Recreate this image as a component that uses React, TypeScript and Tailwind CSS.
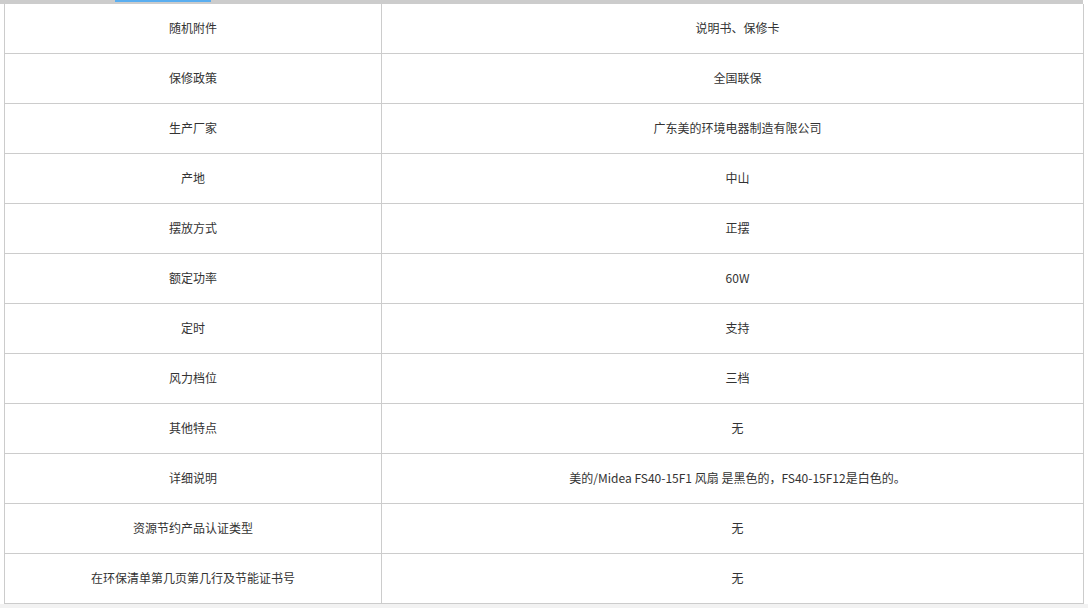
import React from "react";

const rows: [string, string][] = [
  ["随机附件", "说明书、保修卡"],
  ["保修政策", "全国联保"],
  ["生产厂家", "广东美的环境电器制造有限公司"],
  ["产地", "中山"],
  ["摆放方式", "正摆"],
  ["额定功率", "60W"],
  ["定时", "支持"],
  ["风力档位", "三档"],
  ["其他特点", "无"],
  ["详细说明", "美的/Midea FS40-15F1 风扇 是黑色的，FS40-15F12是白色的。"],
  ["资源节约产品认证类型", "无"],
  ["在环保清单第几页第几行及节能证书号", "无"],
];

export default function App() {
  return (
    <div
      className="w-[1088px] h-[608px] bg-white overflow-hidden flex flex-col text-[12px] text-[#333]"
      style={{ fontFamily: '"Microsoft YaHei", "Noto Sans CJK SC", "Noto Sans", sans-serif' }}
    >
      <div className="w-[1083px] h-[4px] bg-[#cccccc] flex shrink-0">
        <div className="ml-[115px] w-[96px] h-[2px] bg-[#5aaef0]" />
      </div>
      <div className="ml-[4px] w-[1080px] border-l border-r border-[#cccccc] flex flex-col shrink-0">
        {rows.map(([k, v], i) => (
          <div key={i} className="flex h-[50px] pb-[2px] border-b border-[#cccccc]">
            <div className="w-[377px] border-r border-[#cccccc] -mb-[2px] pb-[2px] flex items-center justify-center">
              {k}
            </div>
            <div className="flex-1 pl-[10px] flex items-center justify-center">{v}</div>
          </div>
        ))}
      </div>
      <div className="flex-1 bg-[#f2f2f2]" />
    </div>
  );
}
